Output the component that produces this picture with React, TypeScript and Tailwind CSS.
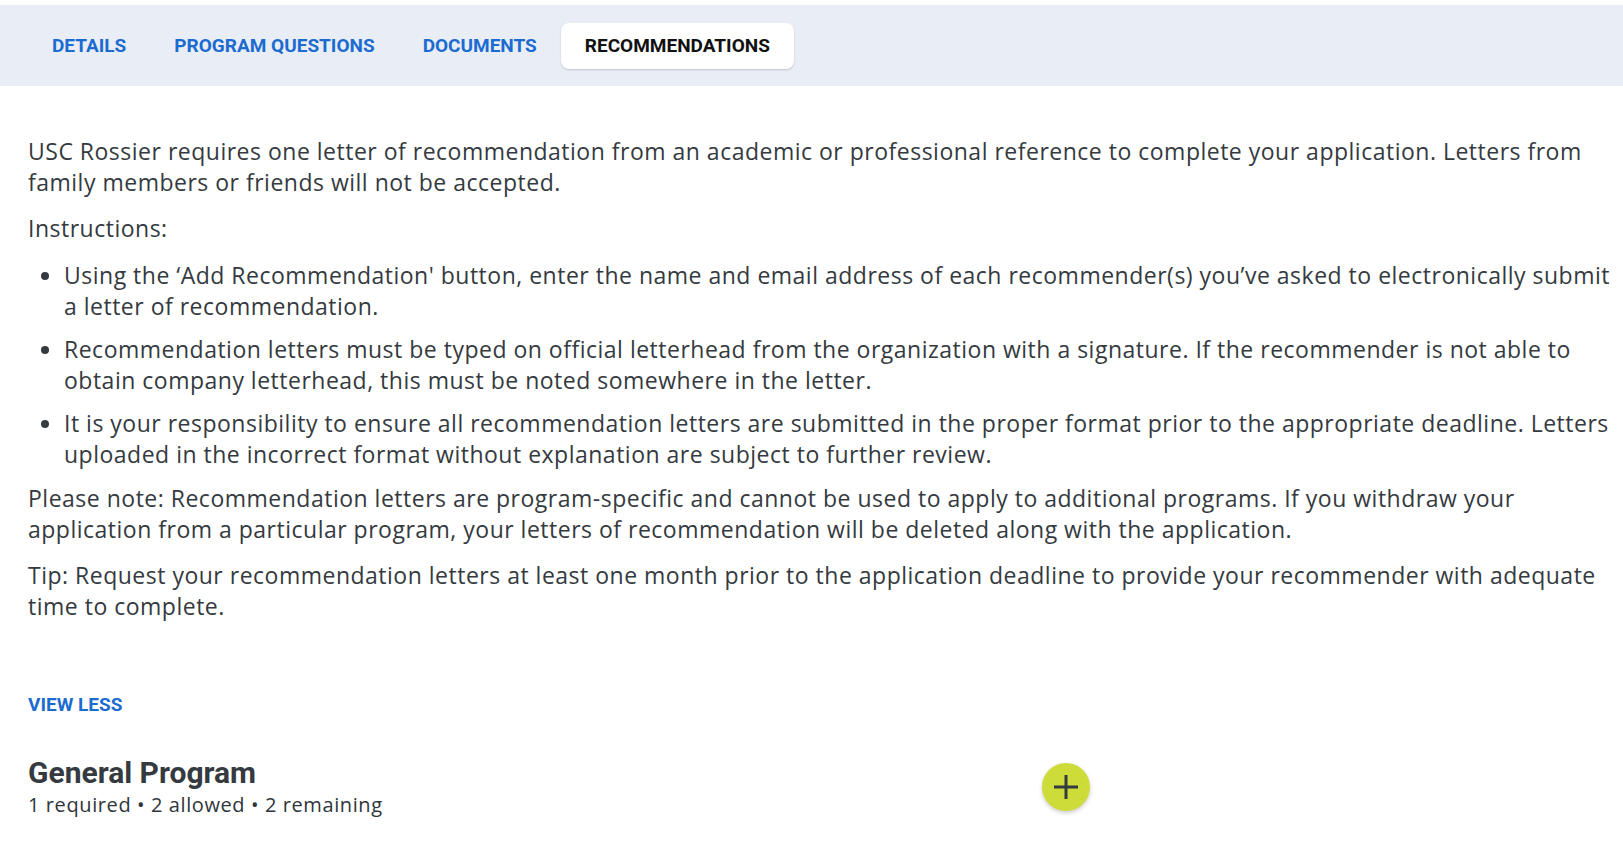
import React from 'react'

const tabs = ['Details', 'Program Questions', 'Documents', 'Recommendations']

const bullets = [
  'Using the \u2018Add Recommendation\' button, enter the name and email address of each recommender(s) you\u2019ve asked to electronically submit a letter of recommendation.',
  'Recommendation letters must be typed on official letterhead from the organization with a signature. If the recommender is not able to obtain company letterhead, this must be noted somewhere in the letter.',
  'It is your responsibility to ensure all recommendation letters are submitted in the proper format prior to the appropriate deadline. Letters uploaded in the incorrect format without explanation are subject to further review.',
]

const App: React.FC = () => {
  const active = 'Recommendations'

  return (
    <div className="min-h-screen bg-white pt-[5px]">
      {/* tab bar */}
      <div className="flex h-[81px] items-center bg-[#e9eef6] pl-[28px]">
        {tabs.map((t) => (
          <button
            key={t}
            className={
              t === active
                ? 'h-[46px] rounded-lg bg-white px-6 font-["Roboto",sans-serif] text-[19px] font-bold uppercase leading-[24px] text-[#111] shadow-[0_1px_2px_rgba(0,0,0,0.18)]'
                : 'h-[46px] px-6 font-["Roboto",sans-serif] text-[19px] font-bold uppercase leading-[24px] text-[#1c6bd0]'
            }
          >
            {t}
          </button>
        ))}
      </div>

      <div className="pl-7 pr-3 pt-[50px] font-['Open_Sans',sans-serif] text-[23px] leading-[31px] tracking-[0.5px] text-[#343a40]">
        <p>
          USC Rossier requires one letter of recommendation from an academic or professional reference to
          complete your application. Letters from family members or friends will not be accepted.
        </p>
        <p className="mt-[15px]">Instructions:</p>
        <ul className="mt-[16px] list-disc pl-[36px]">
          {bullets.map((b, i) => (
            <li key={i} className={i > 0 ? 'mt-[12px]' : ''}>
              {b}
            </li>
          ))}
        </ul>
        <p className="mt-[13px]">
          Please note: Recommendation letters are program-specific and cannot be used to apply to additional
          programs. If you withdraw your application from a particular program, your letters of recommendation
          will be deleted along with the application.
        </p>
        <p className="mt-[15px]">
          Tip: Request your recommendation letters at least one month prior to the application deadline to
          provide your recommender with adequate time to complete.
        </p>

        <button className="mt-[71px] block font-['Roboto',sans-serif] text-[19px] font-bold uppercase leading-[24px] tracking-normal text-[#1c6bd0]">
          View less
        </button>

        <div className="mt-[38px] flex w-[1062px] items-center justify-between">
          <div>
            <h2 className="font-['Roboto',sans-serif] text-[30px] font-bold leading-[36px] tracking-normal text-[#343a40]">
              General Program
            </h2>
            <p className="text-[20px] font-medium leading-[28px] tracking-[0.6px] text-[#2f353b]">
              1 required &bull; 2 allowed &bull; 2 remaining
            </p>
          </div>
          <button className="flex h-[48px] w-[48px] items-center justify-center rounded-full bg-[#cddc39] shadow-[0_2px_4px_rgba(0,0,0,0.2)]">
            <svg width="26" height="26" viewBox="0 0 26 26" fill="none">
              <path d="M13 1v24M1 13h24" stroke="#333a40" strokeWidth="3" />
            </svg>
          </button>
        </div>
      </div>
    </div>
  )
}

export default App
